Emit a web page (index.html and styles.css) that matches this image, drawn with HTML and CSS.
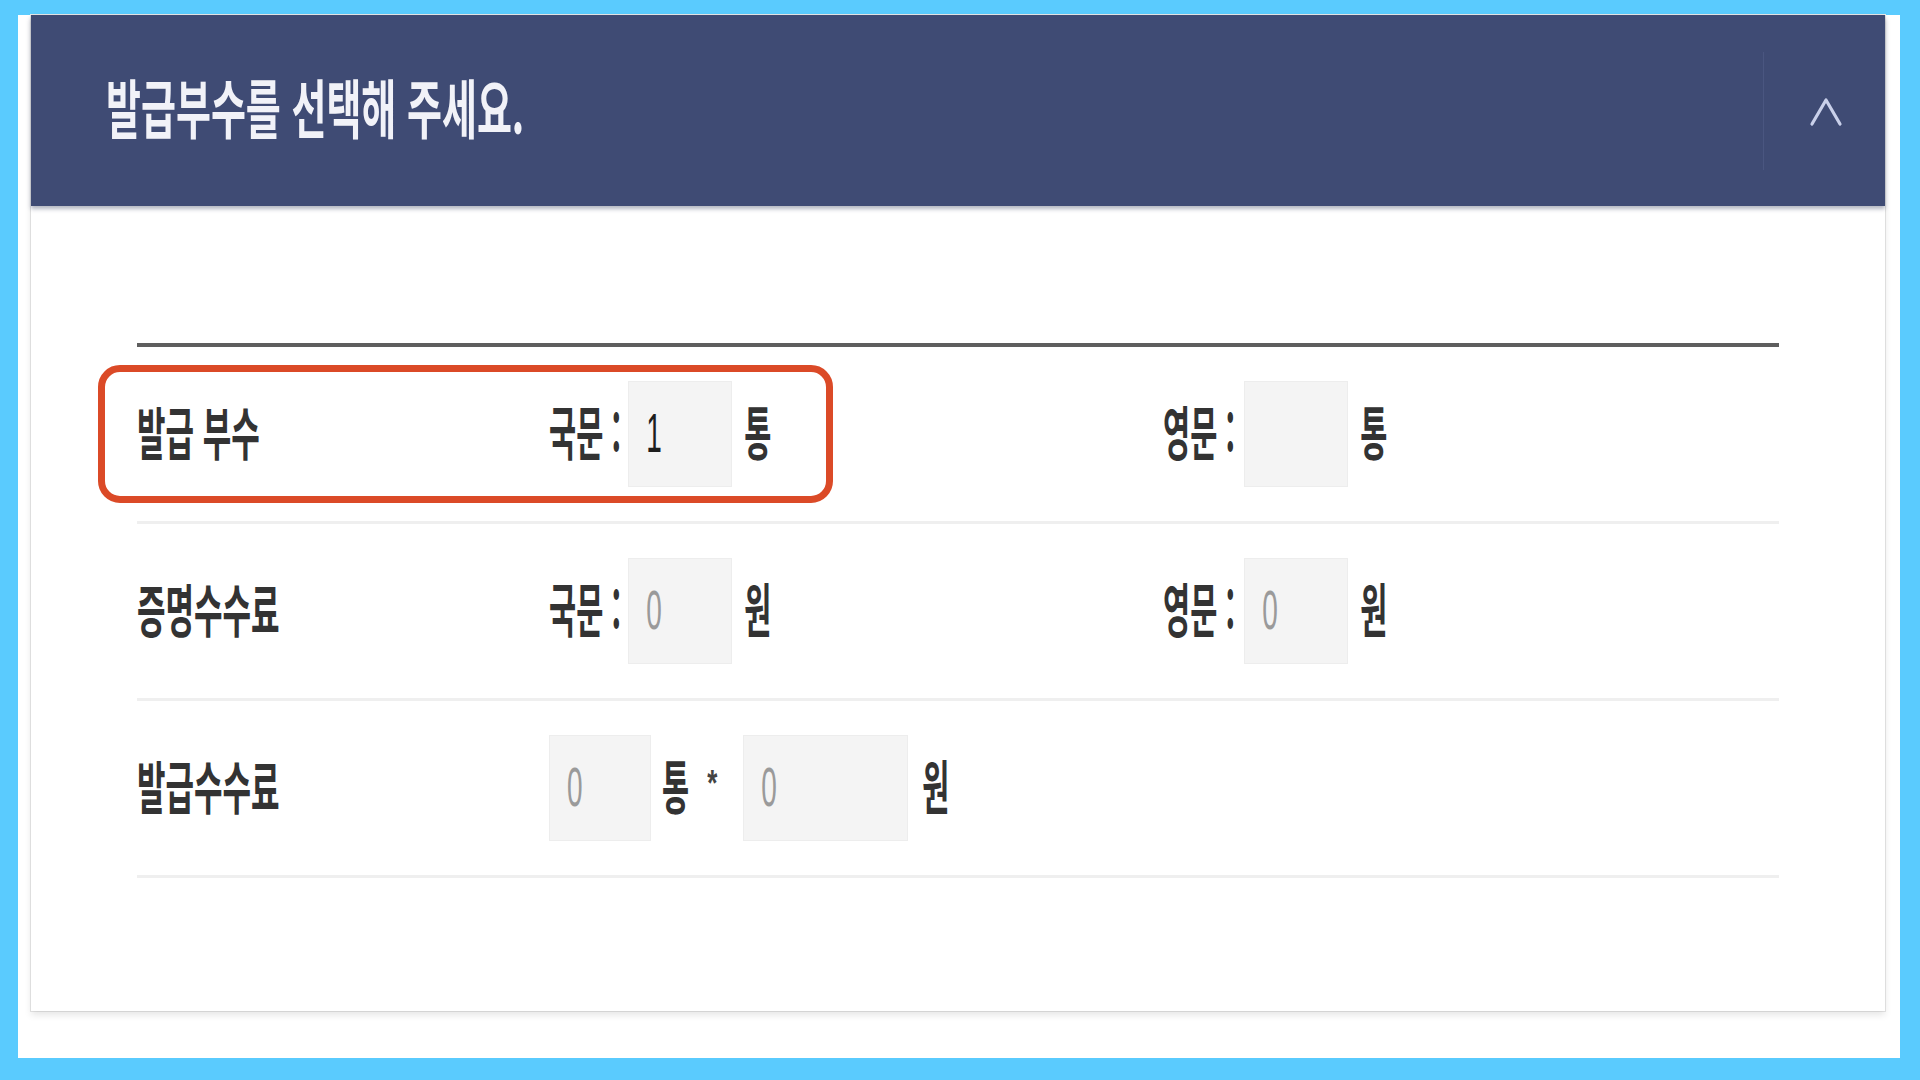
FILE: index.html
```html
<!DOCTYPE html>
<html lang="ko">
<head>
<meta charset="utf-8">
<title>발급부수 선택</title>
<link rel="stylesheet" href="styles.css">
</head>
<body>
<div class="frame">
  <div class="panel">
    <section class="card">
      <header class="card-head">
        <h2 class="title"><span class="title-text">발급부수를 선택해 주세요.</span></h2>
        <button class="toggle" type="button" aria-label="접기">
          <svg class="chevron" width="34" height="32" viewBox="0 0 34 32"><path d="M3 28 L17 4 L31 28" fill="none" stroke="#c9d0ea" stroke-width="3.2" stroke-linecap="round" stroke-linejoin="round"/></svg>
        </button>
      </header>
      <div class="card-body">
        <div class="table">
          <div class="row">
            <div class="label"><span class="t t-label">발급 부수</span></div>
            <div class="cell">
              <span class="t">국문 :</span>
              <div class="box"><span class="num dark">1</span></div>
              <span class="t">통</span>
            </div>
            <div class="cell">
              <span class="t">영문 :</span>
              <div class="box box-en"></div>
              <span class="t">통</span>
            </div>
            <div class="highlight"></div>
          </div>
          <div class="row">
            <div class="label"><span class="t t-label">증명수수료</span></div>
            <div class="cell">
              <span class="t">국문 :</span>
              <div class="box"><span class="num">0</span></div>
              <span class="t">원</span>
            </div>
            <div class="cell">
              <span class="t">영문 :</span>
              <div class="box box-en"><span class="num">0</span></div>
              <span class="t">원</span>
            </div>
          </div>
          <div class="row">
            <div class="label"><span class="t t-label">발급수수료</span></div>
            <div class="cell cell-wide">
              <div class="box box-count"><span class="num">0</span></div>
              <span class="t">통</span>
              <span class="times">*</span>
              <div class="box box-price"><span class="num">0</span></div>
              <span class="t">원</span>
            </div>
          </div>
        </div>
      </div>
    </section>
  </div>
</div>
</body>
</html>
```

FILE: styles.css
```css
html, body {
  margin: 0;
  padding: 0;
}

body {
  width: 1920px;
  height: 1080px;
  overflow: hidden;
  background: #5acbfe;
  font-family: "Noto Sans CJK KR", "Noto Sans", sans-serif;
}

.frame {
  height: 1080px;
  box-sizing: border-box;
  padding: 15px 20px 22px 18px;
}

.panel {
  height: 1043px;
  box-sizing: border-box;
  background: #ffffff;
  padding: 0 15px 0 13px;
}

.card {
  height: 996px;
  display: flex;
  flex-direction: column;
  background: #ffffff;
  box-shadow: 0 4px 7px rgba(0, 0, 0, 0.10), 0 0 0 1px #e8e8e8;
}

.card-head {
  height: 191px;
  flex: none;
  display: flex;
  align-items: center;
  background: #3f4b74;
  box-shadow: 0 3px 4px rgba(40, 48, 80, 0.35);
  position: relative;
  z-index: 1;
}

.title {
  flex: 1;
  margin: 0;
  padding: 0 0 10px 75px;
  font-size: 38px;
  font-weight: 700;
  line-height: 1;
  color: #f1f2f8;
}

.title-text {
  display: inline-block;
  transform: scaleY(1.68);
}

.toggle {
  width: 122px;
  height: 118px;
  margin-top: 1px;
  padding: 0;
  border: 0;
  border-left: 1px solid #4a5680;
  background: transparent;
  display: flex;
  align-items: center;
  justify-content: center;
}

.chevron {
  display: block;
  margin-left: 3px;
  margin-top: 2px;
}

.card-body {
  flex: 1;
  padding: 137px 106px 0 106px;
}

.table {
  border-top: 4px solid #5e5e5e;
}

.row {
  position: relative;
  display: grid;
  grid-template-columns: 412px 614px 1fr;
  align-items: center;
  height: 174px;
  border-bottom: 3px solid #efefef;
}

.t {
  display: inline-block;
  font-size: 29.5px;
  font-weight: 700;
  line-height: 1;
  color: #333333;
  white-space: pre;
  transform: translateY(-3px) scaleY(1.95);
}

.t-label {
  font-size: 31px;
  transform: translateY(-4px) scaleY(1.85);
}

.label {
  display: flex;
  align-items: center;
}

.cell {
  display: flex;
  align-items: center;
}

.box {
  width: 104px;
  height: 106px;
  box-sizing: border-box;
  margin: 0 12px 0 7px;
  padding-left: 18px;
  display: flex;
  align-items: center;
  background: #f4f4f4;
  box-shadow: inset 0 0 0 1px #ededed;
}

.box-en {
  margin-left: 9px;
}

.box-count {
  width: 102px;
  margin: 0 11px 0 0;
}

.box-price {
  width: 165px;
  margin: 0 14px 0 0;
}

.num {
  display: inline-block;
  font-family: "Liberation Sans", "DejaVu Sans", sans-serif;
  font-size: 28px;
  line-height: 1;
  color: #9a9a9a;
  transform: scaleY(1.95);
}

.num.dark {
  color: #1e1e1e;
}

.times {
  display: inline-block;
  margin: 0 26px 10px 18px;
  font-family: "Liberation Sans", sans-serif;
  font-weight: 700;
  font-size: 26px;
  line-height: 1;
  color: #444444;
  transform: scaleY(1.4);
}

.highlight {
  position: absolute;
  left: -39px;
  top: 18px;
  width: 735px;
  height: 138px;
  box-sizing: border-box;
  border: 7px solid #db4a27;
  border-radius: 22px;
  pointer-events: none;
}
```
